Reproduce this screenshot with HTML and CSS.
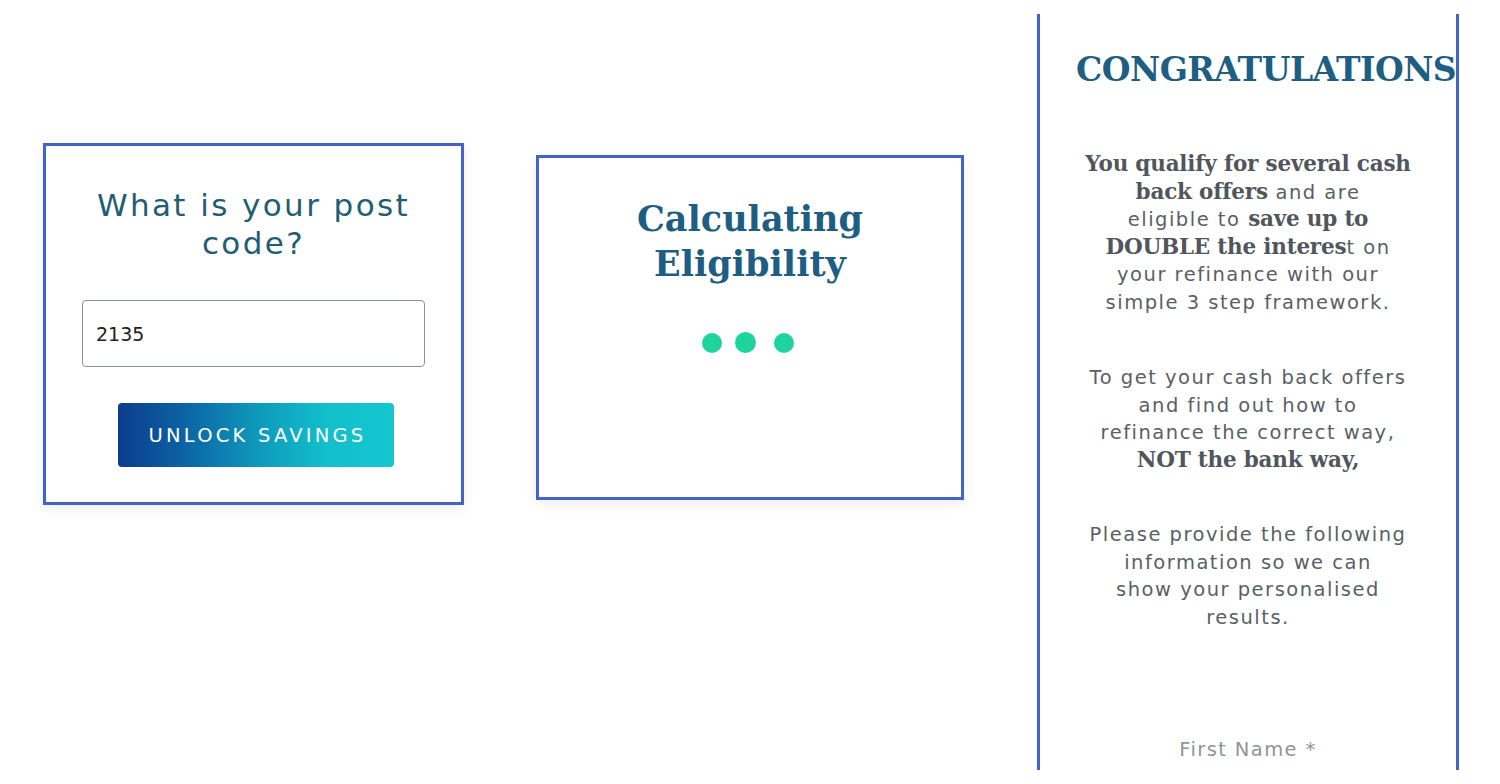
FILE: index.html
```html
<!DOCTYPE html>
<html>
<head>
<meta charset="utf-8">
<link rel="stylesheet" href="styles.css">
</head>
<body>
<div class="page">
  <section class="card card-post">
    <h2 class="post-title">What is your post code?</h2>
    <div class="input-box">2135</div>
    <button class="unlock-btn">UNLOCK SAVINGS</button>
  </section>

  <section class="card card-calc">
    <h2 class="calc-title">Calculating Eligibility</h2>
    <div class="dots">
      <span class="dot"></span><span class="dot dot-mid"></span><span class="dot"></span>
    </div>
  </section>

  <section class="congrats">
    <h1 class="congrats-title">CONGRATULATIONS</h1>
    <p class="copy copy-1"><b>You qualify for several cash</b><br><b>back offers</b> and are<br>eligible to <b>save up to</b><br><b>DOUBLE the interes</b>t on<br>your refinance with our<br>simple 3 step framework.</p>
    <p class="copy copy-2">To get your cash back offers<br>and find out how to<br>refinance the correct way,<br><b>NOT the bank way,</b></p>
    <p class="copy copy-3">Please provide the following<br>information so we can<br>show your personalised<br>results.</p>
    <div class="field-label">First Name *</div>
  </section>
</div>
</body>
</html>
```

FILE: styles.css
```css
* { box-sizing: border-box; }
html, body { margin: 0; padding: 0; background: #ffffff; }
body { font-family: "DejaVu Sans", "Noto Sans", sans-serif; }

.page {
  display: flex;
  align-items: flex-start;
  padding-left: 43px;
  width: 1500px;
  height: 784px;
  overflow: hidden;
}

.card {
  border: 3px solid #4263c9;
  background: #fff;
  box-shadow: 0 4px 12px rgba(0, 0, 0, 0.07);
  display: flex;
  flex-direction: column;
  align-items: center;
}

.card-post {
  width: 421px;
  height: 362px;
  margin-top: 143px;
  padding-top: 40px;
}

.post-title {
  margin: 0;
  width: 370px;
  text-align: center;
  font-weight: 400;
  font-size: 31px;
  line-height: 38px;
  color: #1f5e73;
  letter-spacing: 2.4px;
}

.input-box {
  margin-top: 38px;
  width: 343px;
  height: 67px;
  border: 1px solid #8c939b;
  border-radius: 4px;
  padding-left: 13px;
  display: flex;
  align-items: center;
  font-size: 19px;
  color: #222;
}

.unlock-btn {
  margin-top: 36px;
  margin-left: 5px;
  width: 276px;
  height: 64px;
  border: none;
  border-radius: 4px;
  background: linear-gradient(90deg, #0b3c8c 0%, #0c5fa2 22%, #0e98bb 50%, #12bfcb 75%, #14c6cf 100%);
  color: #ffffff;
  font-family: "DejaVu Sans", "Noto Sans", sans-serif;
  font-size: 19.5px;
  letter-spacing: 3.2px;
  padding: 0 0 0 3px;
}

.card-calc {
  width: 428px;
  height: 345px;
  margin-top: 155px;
  margin-left: 72px;
  padding-top: 38px;
}

.calc-title {
  margin: 0;
  text-align: center;
  font-family: "DejaVu Serif", "Liberation Serif", serif;
  font-weight: 700;
  font-size: 35px;
  line-height: 45px;
  color: #1d5e82;
  width: 300px;
}

.dots {
  margin-top: 46px;
  margin-left: -4px;
  display: flex;
  align-items: center;
}
.dot {
  width: 20px;
  height: 20px;
  border-radius: 50%;
  background: #1fd39f;
}
.dot-mid {
  width: 21px;
  height: 21px;
  margin: 0 18px 0 13px;
}

.congrats {
  margin-left: 73px;
  margin-top: 14px;
  width: 422px;
  height: 756px;
  border-left: 3px solid #4263c9;
  border-right: 3px solid #4263c9;
  display: flex;
  flex-direction: column;
  align-items: center;
}

.congrats-title {
  margin: 34px 0 0 36px;
  align-self: flex-start;
  white-space: nowrap;
  font-family: "DejaVu Serif", "Liberation Serif", serif;
  font-weight: 700;
  font-size: 33px;
  line-height: 44px;
  color: #1d5e82;
  letter-spacing: -0.5px;
}

.copy {
  margin: 0;
  white-space: nowrap;
  text-align: center;
  font-size: 19.5px;
  line-height: 27.5px;
  color: #5a5f65;
  letter-spacing: 1.5px;
}
.copy b {
  font-family: "DejaVu Serif", "Liberation Serif", serif;
  font-weight: 700;
  font-size: 21.5px;
  line-height: 20px;
  letter-spacing: -0.2px;
  color: #50565c;
}

.copy-1 { margin-top: 59px; }
.copy-2 { margin-top: 48px; }
.copy-3 { margin-top: 47px; }

.field-label {
  margin-top: 107px;
  font-size: 19.5px;
  line-height: 23px;
  color: #8f9499;
  letter-spacing: 1.4px;
}
```
